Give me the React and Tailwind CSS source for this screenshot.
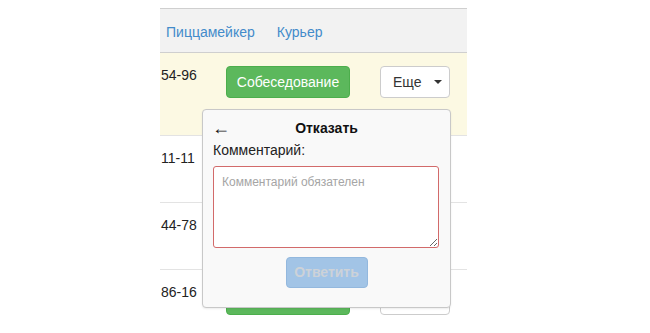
import React from 'react';

const rows = [
  { phone: '54-96', h: 'h-[82px]', bg: 'bg-[#fcf9e3]' },
  { phone: '11-11', h: 'h-[67px]', bg: 'bg-white' },
  { phone: '44-78', h: 'h-[67px]', bg: 'bg-white' },
  { phone: '86-16', h: 'h-[67px]', bg: 'bg-white' },
];

const Row = ({ phone, h, bg, first }) => (
  <div className={`flex items-start ${h} ${bg} ${first ? '' : 'border-t border-[#e3e3e3]'}`}>
    <div className="w-[37px] pl-[1px] pt-[12px] text-[14px] text-[#222] whitespace-nowrap">
      {phone}
    </div>
    <button className="ml-[29px] mt-[13px] w-[124px] h-[32px] rounded-[4px] bg-[#5cb85c] border border-[#4cae4c] text-white text-[14px]">
      Собеседование
    </button>
    <button className="ml-[30px] mt-[13px] w-[70px] h-[32px] rounded-[4px] bg-white border border-[#ccc] text-[#333] text-[14px] flex items-center pl-[12px]">
      <span>Еще</span>
      <span className="ml-[12px] w-0 h-0 border-l-[4px] border-r-[4px] border-t-[4px] border-l-transparent border-r-transparent border-t-[#333]" />
    </button>
  </div>
);

export default function App() {
  return (
    <div className="w-[650px] h-[333px] bg-white overflow-hidden" style={{ fontFamily: '"Liberation Sans", Arial, sans-serif' }}>
      <div className="relative ml-[160px] mt-[8px] w-[307px] h-[325px] overflow-hidden">
        <div className="h-[45px] bg-[#f2f2f2] border-y border-[#cfcfcf] flex items-center gap-[22px] pl-[6px] pt-[3px] text-[14px] text-[#428bca]">
          <span>Пиццамейкер</span>
          <span>Курьер</span>
        </div>
        {rows.map((r, i) => (
          <Row key={i} {...r} first={i === 0} />
        ))}
        <div className="absolute left-[42px] top-[101px] w-[249px] h-[199px] bg-[#f9f9f9] border border-[#c8c8c8] rounded-[4px] shadow-[0_1px_2px_rgba(0,0,0,0.08)] px-[10px] pt-[7px]">
          <div className="relative flex items-center justify-center h-[22px]">
            <span className="absolute left-[-1px] text-[18px] leading-none text-[#111]">←</span>
            <span className="text-[14px] font-bold text-[#111]">Отказать</span>
          </div>
          <div className="mt-[1px] text-[14px] text-[#222]">Комментарий:</div>
          <textarea
            className="mt-[5px] block w-[226px] h-[82px] bg-white border border-[#d26a6a] rounded-[3px] px-[8px] py-[6px] text-[12px] placeholder:text-[#a5a5a5] outline-none"
            placeholder="Комментарий обязателен"
          />
          <div className="flex justify-center mt-[9px]">
            <button disabled className="w-[82px] h-[31px] rounded-[4px] bg-[#a2c4e6] border border-[#93b8de] text-[#cdd2d8] text-[14px] font-bold">
              Ответить
            </button>
          </div>
        </div>
      </div>
    </div>
  );
}
